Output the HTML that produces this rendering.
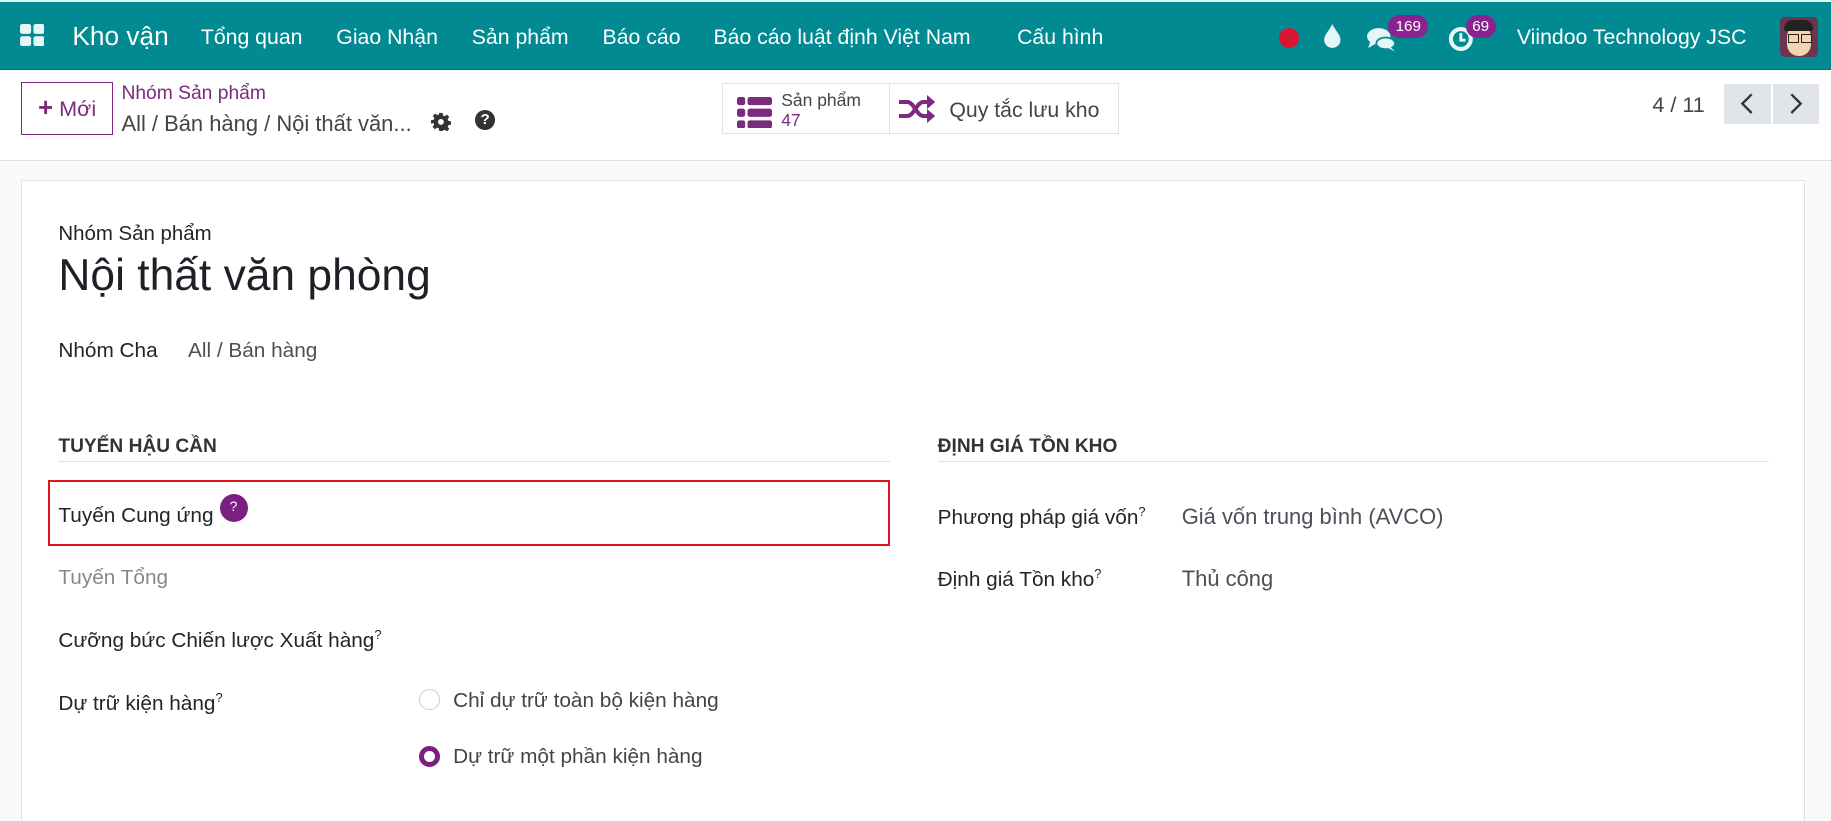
<!DOCTYPE html>
<html><head><meta charset="utf-8"><style>
html,body{margin:0;padding:0;width:1831px;height:821px;overflow:hidden;background:#f9fafb}
#w{zoom:1.16773;position:relative;width:1568px;height:703px;font-family:"Liberation Sans",sans-serif;color:#212529}
.a{position:absolute;white-space:nowrap}
#nav{position:absolute;left:0;top:0;width:1568px;height:60px;background:#028a93;border-top:2px solid #dfe;box-sizing:border-box;border-bottom:1px solid #0a6a70}
#nav .a{color:#fff;font-size:18.2px;top:20px}
#cp{position:absolute;left:0;top:60px;width:1568px;height:77px;background:#fff;border-bottom:1px solid #dee2e6}
.badge{position:absolute;background:#8a2290;color:#fff;border-radius:10px;font-size:13px;text-align:center;height:20px;line-height:20px}
#card{position:absolute;left:18px;top:154px;width:1528px;height:560px;background:#fff;border:1px solid #dee2e6;box-sizing:border-box}
.lbl{font-size:17.8px;color:#212529}
.val{font-size:17.8px;color:#4b5058}
sup{font-size:11px}
.h{font-size:16.4px;font-weight:bold;color:#333}
</style></head><body><div id="w">
<div id="nav">
 <svg class="a" style="left:17px;top:19px" width="21" height="19" viewBox="0 0 21 19"><rect x="0" y="0" width="9.5" height="8.5" rx="2" fill="#e6f6f7"/><rect x="11.5" y="0" width="9.5" height="8.5" rx="2" fill="#e6f6f7"/><rect x="0" y="10.5" width="9.5" height="8.5" rx="2" fill="#e6f6f7"/><rect x="11.5" y="10.5" width="9.5" height="8.5" rx="2" fill="#e6f6f7"/></svg>
 <div class="a" style="left:62px;top:16px;font-size:22.5px">Kho vận</div>
 <div class="a" style="left:172px">Tổng quan</div>
 <div class="a" style="left:288px">Giao Nhận</div>
 <div class="a" style="left:404px">Sản phẩm</div>
 <div class="a" style="left:516px">Báo cáo</div>
 <div class="a" style="left:611px">Báo cáo luật định Việt Nam</div>
 <div class="a" style="left:871px">Cấu hình</div>
 <div class="a" style="left:1095px;top:22px;width:17px;height:17px;border-radius:50%;background:#d9152f"></div>
 <svg class="a" style="left:1133px;top:19px" width="16" height="21" viewBox="0 0 16 21"><path d="M8 0C6 5 1 9 1 13.5A7 7 0 0 0 15 13.5C15 9 10 5 8 0Z" fill="#e6f6f7"/></svg>
 <svg class="a" style="left:1171px;top:21px" width="26" height="22" viewBox="0 0 26 22"><ellipse cx="10" cy="8" rx="10" ry="7" fill="#e6f6f7"/><path d="M3 12L1 18L8 14Z" fill="#e6f6f7"/><ellipse cx="16" cy="14" rx="8" ry="5" fill="#e6f6f7" stroke="#028a93" stroke-width="1.5"/><path d="M20 17L24 21L18 18Z" fill="#e6f6f7"/></svg>
 <div class="badge" style="left:1189px;top:11px;width:34px">169</div>
 <svg class="a" style="left:1240px;top:20px" width="24" height="24" viewBox="0 0 24 24"><circle cx="11" cy="12" r="8.5" fill="none" stroke="#e6f6f7" stroke-width="3.5"/><path d="M11 7V13H15" fill="none" stroke="#e6f6f7" stroke-width="2.5"/></svg>
 <div class="badge" style="left:1255px;top:11px;width:26px">69</div>
 <div class="a" style="left:1299px">Viindoo Technology JSC</div>
 <div class="a" style="left:1524px;top:13px;width:33px;height:34px;border-radius:4px;background:#6b3550;overflow:hidden"><div style="position:absolute;left:6px;top:7px;width:21px;height:26px;border-radius:10px;background:#f6d4b0"></div><div style="position:absolute;left:4px;top:2px;width:25px;height:10px;border-radius:8px 8px 2px 2px;background:#222"></div><div style="position:absolute;left:7px;top:14px;width:8px;height:6px;border:1.5px solid #222"></div><div style="position:absolute;left:18px;top:14px;width:8px;height:6px;border:1.5px solid #222"></div></div>
</div>
<div id="cp">
 <div class="a" style="left:18px;top:10px;width:79px;height:46px;border:1px solid #7b2a80;box-sizing:border-box;color:#7b2a80;font-size:18.5px;line-height:44px;text-align:center"><b style="font-size:22px">+</b> Mới</div>
 <div class="a" style="left:104px;top:11px;color:#7b2a80;font-size:16.5px">Nhóm Sản phẩm</div>
 <div class="a" style="left:104px;top:35px;color:#444;font-size:18.8px">All / Bán hàng / Nội thất văn...</div>
 <svg class="a" style="left:369px;top:36px" width="17" height="17" viewBox="0 0 24 24"><path fill="#333" d="M10 1h4l.6 3.2 2 .9 2.7-1.9 2.8 2.8-1.9 2.7.9 2 3.2.6v4l-3.2.6-.9 2 1.9 2.7-2.8 2.8-2.7-1.9-2 .9L14 23h-4l-.6-3.2-2-.9-2.7 1.9-2.8-2.8 1.9-2.7-.9-2L0 14v-4l3.2-.6.9-2L2.2 4.7 5 1.9l2.7 1.9 2-.9z"/><circle cx="12" cy="12" r="3.5" fill="#fff"/></svg>
 <div class="a" style="left:407px;top:34px;width:17px;height:17px;border-radius:50%;background:#333;color:#fff;font-size:13px;font-weight:bold;text-align:center;line-height:17px">?</div>
 <div class="a" style="left:618px;top:11px;width:340px;height:44px;border:1px solid #dee2e6;box-sizing:border-box"></div>
 <div class="a" style="left:761px;top:11px;width:1px;height:44px;background:#dee2e6"></div>
 <svg class="a" style="left:631px;top:23px" width="30" height="27" viewBox="0 0 30 27"><g fill="#7b2a80"><rect x="0" y="0" width="7" height="7" rx="2"/><rect x="9" y="0" width="21" height="7" rx="2"/><rect x="0" y="10" width="7" height="7" rx="2"/><rect x="9" y="10" width="21" height="7" rx="2"/><rect x="0" y="20" width="7" height="7" rx="2"/><rect x="9" y="20" width="21" height="7" rx="2"/></g></svg>
 <div class="a" style="left:669px;top:17px;font-size:15px;color:#444">Sản phẩm</div>
 <div class="a" style="left:669px;top:34px;font-size:15px;color:#7b2a80">47</div>
 <svg class="a" style="left:770px;top:21px" width="32" height="24" viewBox="0 0 32 24"><g fill="none" stroke="#7b2a80" stroke-width="3.5"><path d="M0 6H7C13 6 15 18 21 18H26"/><path d="M0 18H7C13 18 15 6 21 6H26"/></g><path fill="#7b2a80" d="M24 0L31 6L24 12Z M24 12L31 18L24 24Z"/></svg>
 <div class="a" style="left:813px;top:24px;font-size:18.2px;color:#444">Quy tắc lưu kho</div>
 <div class="a" style="left:1415px;top:19px;font-size:18.5px;color:#444">4 / 11</div>
 <div class="a" style="left:1476px;top:12px;width:41px;height:34px;background:#e1e4e8"></div>
 <div class="a" style="left:1518px;top:12px;width:40px;height:34px;background:#e1e4e8"></div>
 <svg class="a" style="left:1490px;top:19px" width="12" height="20" viewBox="0 0 12 20"><path d="M10 2L2 10L10 18" fill="none" stroke="#333" stroke-width="2"/></svg>
 <svg class="a" style="left:1532px;top:19px" width="12" height="20" viewBox="0 0 12 20"><path d="M2 2L10 10L2 18" fill="none" stroke="#333" stroke-width="2"/></svg>
</div>
<div id="card"></div>
<div class="a lbl" style="left:50px;top:191px;font-size:17.5px">Nhóm Sản phẩm</div>
<div class="a" style="left:50px;top:215px;font-size:38px;color:#1d2127">Nội thất văn phòng</div>
<div class="a lbl" style="left:50px;top:290px">Nhóm Cha</div>
<div class="a val" style="left:161px;top:290px">All / Bán hàng</div>
<div class="a h" style="left:50px;top:373px">TUYẾN HẬU CẦN</div>
<div class="a" style="left:50px;top:395px;width:712px;height:1px;background:#dee2e6"></div>
<div class="a h" style="left:803px;top:373px">ĐỊNH GIÁ TỒN KHO</div>
<div class="a" style="left:803px;top:395px;width:712px;height:1px;background:#dee2e6"></div>
<div class="a" style="left:41px;top:411px;width:721px;height:57px;border:2px solid #e0141e;box-sizing:border-box"></div>
<div class="a lbl" style="left:50px;top:432px">Tuyến Cung ứng</div>
<div class="a" style="left:188px;top:423px;width:24px;height:24px;border-radius:50%;background:#7b1f82;color:#fff;font-size:12px;text-align:center;line-height:22px">?</div>
<div class="a lbl" style="left:50px;top:485px;color:#888">Tuyến Tổng</div>
<div class="a lbl" style="left:50px;top:537px">Cưỡng bức Chiến lược Xuất hàng<sup>?</sup></div>
<div class="a lbl" style="left:50px;top:591px">Dự trữ kiện hàng<sup>?</sup></div>
<div class="a" style="left:359px;top:590px;width:18px;height:18px;border-radius:50%;border:1px solid #ccc;box-sizing:border-box"></div>
<div class="a val" style="left:388px;top:590px;color:#444">Chỉ dự trữ toàn bộ kiện hàng</div>
<div class="a" style="left:359px;top:639px;width:18px;height:18px;border-radius:50%;border:5px solid #7b1f82;box-sizing:border-box;background:#fff"></div>
<div class="a val" style="left:388px;top:638px;color:#444">Dự trữ một phần kiện hàng</div>
<div class="a lbl" style="left:803px;top:432px">Phương pháp giá vốn<sup>?</sup></div>
<div class="a val" style="left:1012px;top:432px;font-size:18.8px">Giá vốn trung bình (AVCO)</div>
<div class="a lbl" style="left:803px;top:485px">Định giá Tồn kho<sup>?</sup></div>
<div class="a val" style="left:1012px;top:485px;font-size:18.8px">Thủ công</div>
</div></body></html>
